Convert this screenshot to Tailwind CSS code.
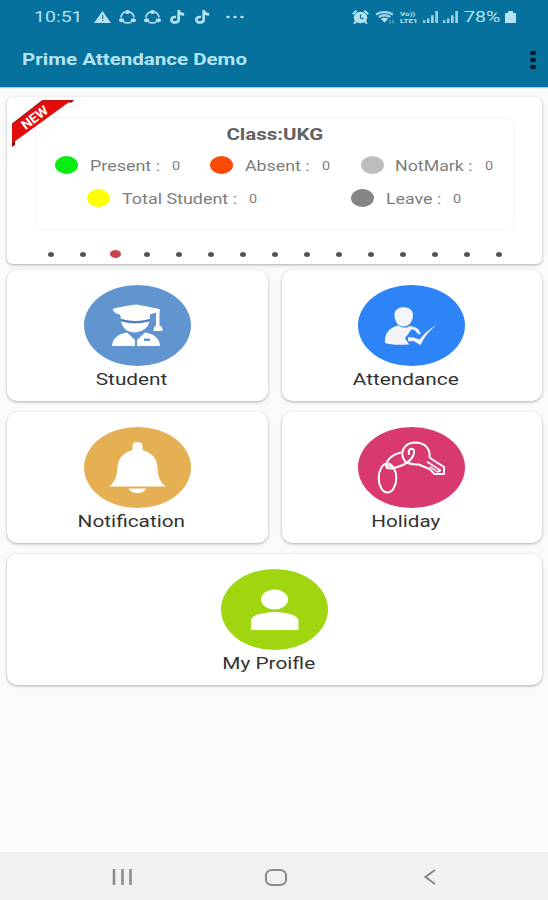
<!DOCTYPE html>
<html lang="en">
<head>
  <meta charset="UTF-8">
  <meta name="viewport" content="width=device-width, initial-scale=1.0">
  <title>Prime Attendance Demo</title>
  <script src="https://cdn.jsdelivr.net/npm/@tailwindcss/browser@4"></script>
</head>
<body class="flex h-screen flex-col overflow-hidden bg-[#fafafa] font-['Roboto',sans-serif]">

  <!-- header -->
  <header class="h-[87px] shrink-0 bg-[#05719c] text-[#b5e3f2] shadow-[0_1px_1px_#9fcbdc]">
    <div class="flex h-[34px] items-center pl-[34px]">
      <span class="w-[60px] shrink-0"><span class="inline-block origin-left scale-x-[1.3] text-[15px] leading-none">10:51</span></span>
      <svg class="h-3 w-[17px] shrink-0" viewBox="0 0 17 12" fill="currentColor"><path d="M8.5 0 17 12H0z"/><path d="M8 4h1.4v4H8zM8 9h1.4v1.3H8z" fill="#4b8298"/></svg>
      <svg class="ml-2 h-[14px] w-[17px] shrink-0" viewBox="0 0 17 14" fill="none" stroke="currentColor" stroke-width="1.7"><path d="M2 7.5Q2.4 3.3 6 2M11 2q3.5 1.2 4 5.3M4.5 12q4 2 8 0"/><g fill="currentColor" stroke="none"><ellipse cx="8.5" cy="2" rx="2.6" ry="2"/><ellipse cx="2.6" cy="10.3" rx="2.6" ry="2"/><ellipse cx="14.4" cy="10.3" rx="2.6" ry="2"/></g></svg>
      <svg class="ml-2 h-[14px] w-[17px] shrink-0" viewBox="0 0 17 14" fill="none" stroke="currentColor" stroke-width="1.7"><path d="M2 7.5Q2.4 3.3 6 2M11 2q3.5 1.2 4 5.3M4.5 12q4 2 8 0"/><g fill="currentColor" stroke="none"><ellipse cx="8.5" cy="2" rx="2.6" ry="2"/><ellipse cx="2.6" cy="10.3" rx="2.6" ry="2"/><ellipse cx="14.4" cy="10.3" rx="2.6" ry="2"/></g></svg>
      <svg class="ml-[9px] h-[14px] w-[15px] shrink-0" viewBox="0 0 15 14" fill="none" stroke="currentColor" stroke-width="2.6"><path d="M8.7 0v9.5c0 4-7.4 4-7.4.2 0-2 2.2-3.2 4.7-2.6M8.7.5c.4 2.7 2.3 3.8 5.5 3.9"/></svg>
      <svg class="ml-[10px] h-[14px] w-[15px] shrink-0" viewBox="0 0 15 14" fill="none" stroke="currentColor" stroke-width="2.6"><path d="M8.7 0v9.5c0 4-7.4 4-7.4.2 0-2 2.2-3.2 4.7-2.6M8.7.5c.4 2.7 2.3 3.8 5.5 3.9"/></svg>
      <svg class="ml-4 h-1 w-[18px] shrink-0" viewBox="0 0 18 4" fill="currentColor"><ellipse cx="2" cy="2" rx="1.8" ry="1.3"/><ellipse cx="9" cy="2" rx="1.8" ry="1.3"/><ellipse cx="16" cy="2" rx="1.8" ry="1.3"/></svg>

      <svg class="ml-[108px] h-[14px] w-[17px] shrink-0" viewBox="0 0 17 14" fill="currentColor"><ellipse cx="8.5" cy="7.5" rx="6.7" ry="5.7"/><path d="M0 3.5 4 0l1.5 1.2-4 3.5zM17 3.5 13 0l-1.5 1.2 4 3.5zM3 10l2 2-2 2H1.5zM14 10l-2 2 2 2h1.5z"/><path d="M8.5 4.3V8l3 .8" fill="none" stroke="#05719c" stroke-width="1.2"/></svg>
      <svg class="ml-[6px] h-[13px] w-[20px] shrink-0" viewBox="0 0 20 13" fill="none" stroke="currentColor"><path d="M1 3.6q8.5-5 17 0M3.8 6q5.7-3.5 11.4 0" stroke-width="2.3" opacity=".85"/><path d="m5.800 7.800 3.700 3.600 3.700-3.600q-3.700-2-7.400 0z" fill="currentColor" stroke="none"/><path d="M15 12.500V9M18 9v3.500" stroke-width="1.300" opacity=".5"/></svg>
      <div class="ml-[5px] flex w-[19px] shrink-0 flex-col text-[6px] leading-[7px] font-bold"><span class="block w-[13px] origin-left scale-x-[1.35]">Vo))</span><span class="block w-[13px] origin-left scale-x-[1.35]">LTE1</span></div>
      <svg class="ml-[4px] h-[12px] w-[16px] shrink-0" viewBox="0 0 16 13" preserveAspectRatio="none" fill="currentColor" opacity=".85"><path d="M0 10h2.500v3H0zM4 8h2.500v5H4zM8 4.500h2.700V13H8zM12.300 0H15v13h-2.700z"/></svg>
      <svg class="ml-1 h-[12px] w-[16px] shrink-0" viewBox="0 0 16 13" preserveAspectRatio="none" fill="currentColor" opacity=".85"><path d="M0 10h2.500v3H0zM4 8h2.500v5H4zM8 4.500h2.700V13H8zM12.300 0H15v13h-2.700z"/></svg>
      <span class="ml-[5px] w-[41px] shrink-0"><span class="inline-block origin-left scale-x-[1.3] text-[15px] leading-none">78%</span></span>
      <svg class="h-3 w-[11px] shrink-0" viewBox="0 0 11 12" fill="currentColor"><path d="M3 0h5v2h3v10H0V2h3z"/></svg>
    </div>
    <div class="flex h-[51px] items-center justify-between pr-[11px] pl-[22px]">
      <h1 class="origin-left scale-x-[1.283] pt-px text-base leading-none font-bold">Prime Attendance Demo</h1>
      <svg class="h-5 w-[8px]" viewBox="0 0 8 20" fill="#041d2a"><ellipse cx="4" cy="3" rx="3" ry="2.200"/><ellipse cx="4" cy="10" rx="3" ry="2.200"/><ellipse cx="4" cy="17" rx="3" ry="2.200"/></svg>
    </div>
  </header>

  <main class="flex-1 pt-[10px] pr-[6px] pl-[7px]">
    <!-- class summary -->
    <section class="relative h-[167px] rounded-md bg-white pr-[27px] pl-[28px] pt-5 shadow-[0_1px_3px_#00000050]">
      <svg class="absolute top-[3px] left-[5px] h-[47px] w-[63px]" viewBox="0 0 63 47">
        <path d="M0 37v10l3-2v-6zM53 0h9l-2 2.500h-9z" fill="#8f1010"/>
        <path d="M0 24 31 0h29L2 42H0z" fill="#e30b0b"/>
        <path d="M0 24 31 0h29" fill="none" stroke="#98181c"/>
        <text x="23" y="22" transform="rotate(-37 23 18)" text-anchor="middle" textLength="30" lengthAdjust="spacingAndGlyphs" font-size="13" font-weight="700" fill="#fff">NEW</text>
      </svg>
      <div class="h-[113px] rounded-lg border border-[#f4f4f4] text-sm leading-none text-[#7d7d7d]">
        <h2 class="mt-[9px] text-center text-base leading-4 font-bold text-[#626262]"><span class="inline-block scale-x-[1.28]">Class:UKG</span></h2>
        <div class="mt-[12px] flex h-[20px] items-center pl-[19px]">
          <span class="h-[18px] w-[23px] rounded-[50%] bg-[#08ec12]"></span>
          <span class="ml-3 w-[82px] pt-[2px]"><span class="inline-block origin-left scale-x-[1.28] whitespace-nowrap">Present :</span></span>
          <span class="w-[38px] pt-[2px] text-[12px]"><span class="inline-block origin-left scale-x-[1.2]">0</span></span>
          <span class="h-[18px] w-[23px] rounded-[50%] bg-[#fb4a05]"></span>
          <span class="ml-3 w-[77px] pt-[2px]"><span class="inline-block origin-left scale-x-[1.27] whitespace-nowrap">Absent :</span></span>
          <span class="w-[39px] pt-[2px] text-[12px]"><span class="inline-block origin-left scale-x-[1.2]">0</span></span>
          <span class="h-[18px] w-[23px] rounded-[50%] bg-[#bdbdbd]"></span>
          <span class="ml-[11px] w-[90px] pt-[2px]"><span class="inline-block origin-left scale-x-[1.27] whitespace-nowrap">NotMark :</span></span>
          <span class="pt-[2px] text-[12px]"><span class="inline-block origin-left scale-x-[1.2]">0</span></span>
        </div>
        <div class="mt-[13px] flex h-[20px] items-center pl-[51px]">
          <span class="h-[18px] w-[23px] rounded-[50%] bg-[#ffff04]"></span>
          <span class="ml-3 w-[127px] pt-[2px]"><span class="inline-block origin-left scale-x-[1.28] whitespace-nowrap">Total Student :</span></span>
          <span class="w-[102px] pt-[2px] text-[12px]"><span class="inline-block origin-left scale-x-[1.2]">0</span></span>
          <span class="h-[18px] w-[23px] rounded-[50%] bg-[#858585]"></span>
          <span class="ml-3 w-[67px] pt-[2px]"><span class="inline-block origin-left scale-x-[1.27] whitespace-nowrap">Leave :</span></span>
          <span class="pt-[2px] text-[12px]"><span class="inline-block origin-left scale-x-[1.2]">0</span></span>
        </div>
      </div>
      <!-- pager dots -->
      <div id="dots" class="mt-[19px] flex h-[10px] items-center"></div>
    </section>

    <!-- menu -->
    <div class="mt-[6px] grid grid-cols-2 gap-x-[14px] gap-y-[11px] text-center text-base leading-none text-[#333]">
      <a class="flex h-[131px] flex-col items-center rounded-[10px] bg-white pt-[15px] shadow-[0_1px_3px_#00000050]">
        <svg class="h-[81px] w-[107px]" viewBox="0 0 107 81">
          <ellipse cx="53.5" cy="40.5" rx="53.5" ry="40.5" fill="#6095d0"/>
          <g fill="#fff">
            <path d="M28.5 24.5q0-1 3-1.500Q42 20.500 52 19.500q11 1.500 23 4.500 2 1 0 2.500l-9 3V34Q52 38 37 34l-1-4.500q-5-.5-7.500-5z"/>
            <path d="M37 36.500q14 4 28.500 0Q63 46.500 51 47.500q-12-.5-14-11z"/>
            <path d="M28 61q.5-11 15-13.500L51 55v6zM53 61v-6l8-7.500Q75.500 50 76 61z"/>
            <path d="M72 25h3.500v15.500q3.500 1 3 5.500h-9q0-4.500 2.500-5.500z"/>
          </g>
          <path d="M37 35q14.500 4 29 0" fill="none" stroke="#5079ab" stroke-width="1.500"/>
          <path d="M60 53.500h6v2.500h-6z" fill="#6095d0"/>
        </svg>
        <span class="mt-[6px] pr-[12px]"><span class="inline-block scale-x-[1.3]">Student</span></span>
      </a>
      <a class="flex h-[131px] flex-col items-center rounded-[10px] bg-white pt-[15px] shadow-[0_1px_3px_#00000050]">
        <svg class="h-[81px] w-[107px]" viewBox="0 0 107 81">
          <ellipse cx="53.5" cy="40.5" rx="53.5" ry="40.5" fill="#2d84f7"/>
          <g fill="#f3f5fa">
            <path d="M36.500 30c-1-10.500 19-10.500 18.500 0 0 5-3 11.500-9.500 11.500S36.500 35 36.500 30z"/>
            <path d="M27 58q-1-14 13-17.500 6 4 12 .5 7 1 10 5-3-2-8-1.500L47 53l4 6.500q-17 1-24-1.500z"/>
            <path d="m54 43 6 1.500 3 4-2.500 1-3-3.500z"/>
            <path d="m49.500 52 6 .5 6 2Q68 46 78.500 40 68 48 62.500 60l-7-4-5 .5z"/>
          </g>
          <path d="m54 45-5.500 8.500" fill="none" stroke="#2d84f7" stroke-width="1.500"/>
        </svg>
        <span class="mt-[6px] pr-[12px]"><span class="inline-block scale-x-[1.3]">Attendance</span></span>
      </a>
      <a class="flex h-[131px] flex-col items-center rounded-[10px] bg-white pt-[15px] shadow-[0_1px_3px_#00000050]">
        <svg class="h-[81px] w-[107px]" viewBox="0 0 107 81">
          <ellipse cx="53.5" cy="40.5" rx="53.5" ry="40.5" fill="#e5b054"/>
          <path d="M48.500 23v-4q0-4 5-4t5 4v4Q73 27 73.500 41q0 12 8 18.500h-56Q33 53 33.500 41 34 27 48.500 23z" fill="#fff"/>
          <path d="M44.500 61.500h17.500q-2 4.500-8.500 4.500t-9-4.500z" fill="#fff"/>
        </svg>
        <span class="mt-[6px] pr-[12px]"><span class="inline-block scale-x-[1.3]">Notification</span></span>
      </a>
      <a class="flex h-[131px] flex-col items-center rounded-[10px] bg-white pt-[15px] shadow-[0_1px_3px_#00000050]">
        <svg class="h-[81px] w-[107px]" viewBox="0 0 107 81" fill="none" stroke="#fff" stroke-width="2" stroke-linecap="round" stroke-linejoin="round">
          <ellipse cx="53.5" cy="40.5" rx="53.5" ry="40.5" fill="#d83a70" stroke="none"/>
          <ellipse cx="29.5" cy="51" rx="8.800" ry="14.500"/>
          <path d="M29 41c-3-5 3-13 14-15.500M29 41c5 1.500 22-2.500 26.500-13 1.500-5 0-7-3-6-2 1-2 3-1.500 5"/>
          <path d="M29 38.500q5 0 5.500 3"/>
          <path d="M47.500 35C41 27 45 16 57 15.500c10 0 15.500 6.500 14.500 14.500l2 2L86 40v7h-9.500l-5-5-11-4.500q-7 .5-13-2.500z"/>
          <path d="m69.500 35 13 8.500-3 1.500-7-5" stroke-width="1.500"/>
        </svg>
        <span class="mt-[6px] pr-[12px]"><span class="inline-block scale-x-[1.29]">Holiday</span></span>
      </a>
      <a class="col-span-2 flex h-[131px] flex-col items-center rounded-[10px] bg-white pt-[15px] shadow-[0_1px_3px_#00000050]">
        <svg class="h-[81px] w-[107px]" viewBox="0 0 107 81">
          <ellipse cx="53.5" cy="40.5" rx="53.5" ry="40.5" fill="#9fd610"/>
          <ellipse cx="53.5" cy="30.5" rx="13.5" ry="10" fill="#fff"/>
          <path d="M30 61V52q0-8 24-9 23 1 23.500 9v9z" fill="#fff"/>
        </svg>
        <span class="mt-[6px] pr-[12px]"><span class="inline-block scale-x-[1.3]">My Proifle</span></span>
      </a>
    </div>
  </main>

  <!-- navigation bar -->
  <nav class="flex h-12 shrink-0 items-center bg-[#f1f1f1] pt-[2px] pl-[112px]">
    <svg class="h-4 w-[21px]" viewBox="0 0 21 16" fill="none" stroke="#8a8a8a" stroke-width="2.500"><path d="M2 0v16M10.500 0v16M18.500 0v16"/></svg>
    <svg class="ml-[132px] h-[17px] w-[22px]" viewBox="0 0 22 17" fill="none" stroke="#8a8a8a" stroke-width="2"><rect x="1" y="1" width="20" height="15" rx="6" ry="5"/></svg>
    <svg class="ml-[137px] h-4 w-3" viewBox="0 0 12 16" fill="none" stroke="#8a8a8a" stroke-width="2"><path d="M11 1 1.500 8l9.500 7"/></svg>
  </nav>

  <script>
    // one dot per class, the third one is active
    const dots = document.getElementById('dots');
    for (let i = 0; i < 15; i++) {
      dots.innerHTML += i === 2
        ? '<span class="flex w-8 justify-center"><i class="h-[8px] w-[11px] rounded-[50%] bg-[#c7434c]"></i></span>'
        : '<span class="flex w-8 justify-center"><i class="h-[5px] w-[6px] rounded-[50%] bg-[#555]"></i></span>';
    }
  </script>

</body>
</html>
